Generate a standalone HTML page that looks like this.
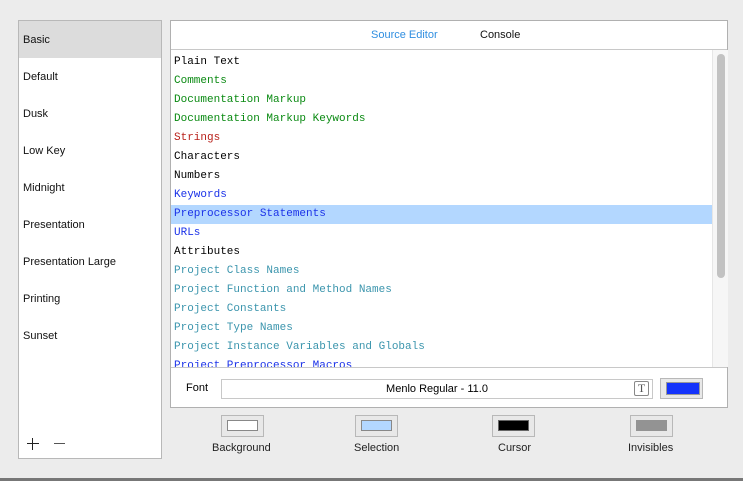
<!DOCTYPE html>
<html><head><style>
body{margin:0;width:743px;height:481px;background:#ececec;position:relative;overflow:hidden;font-family:"Liberation Sans",sans-serif;font-size:11px;}
.left{position:absolute;left:18px;top:20px;width:142px;height:437px;background:#fff;border:1px solid #b8b8b8;}
.left div{height:37px;line-height:39px;padding-left:4px;color:#111;}
.left .sel{background:#dcdcdc;}
.right{position:absolute;left:170px;top:20px;width:556px;height:386px;background:#fff;border:1px solid #b0b0b0;}
.hdr{height:28px;border-bottom:1px solid #c8c8c8;position:relative;}
.hdr span{position:absolute;top:8px;}
.list{position:absolute;left:0;top:29px;width:541px;height:317px;overflow:hidden;font-family:"Liberation Mono",monospace;font-size:11px;padding-top:3px;box-sizing:border-box;}
.list div{height:19px;line-height:19px;padding-left:3px;white-space:pre;}
.g{color:#0a8a12}.r{color:#b8201a}.b{color:#1b32e8}.t{color:#3b95ad}.k{color:#000}
.list .hl{background:#b3d7ff;}
.sb{position:absolute;left:541px;top:29px;width:15px;height:317px;background:#f6f6f6;border-left:1px solid #e6e6e6;}
.thumb{position:absolute;left:4px;top:4px;width:8px;height:224px;background:#c2c2c2;border-radius:4px;}
.foot{position:absolute;left:0;top:346px;width:556px;height:40px;border-top:1px solid #c8c8c8;}
.field{position:absolute;left:50px;top:11px;width:430px;height:18px;border:1px solid #c8c8c8;text-align:center;line-height:18px;font-size:11px;}
.well{position:absolute;border:1px solid #b8b8b8;background:#e8e8e8;}
.well i{position:absolute;left:5px;top:4px;border:1px solid #888;}
.lbl{position:absolute;top:442px;font-size:11px;color:#222;}
</style></head><body>
<div class="left">
<div class="sel">Basic</div><div>Default</div><div>Dusk</div><div>Low Key</div><div>Midnight</div><div>Presentation</div><div>Presentation Large</div><div>Printing</div><div>Sunset</div>
</div>
<div style="position:absolute;left:27px;top:443px;width:12px;height:1px;background:#222"></div>
<div style="position:absolute;left:32px;top:438px;width:1px;height:12px;background:#222"></div>
<div style="position:absolute;left:54px;top:443px;width:11px;height:1px;background:#555"></div>
<div class="right">
<div class="hdr"><span style="left:200px;color:#2f8ee0">Source Editor</span><span style="left:309px;color:#111">Console</span></div>
<div class="list">
<div class="k">Plain Text</div><div class="g">Comments</div><div class="g">Documentation Markup</div><div class="g">Documentation Markup Keywords</div><div class="r">Strings</div><div class="k">Characters</div><div class="k">Numbers</div><div class="b">Keywords</div><div class="b hl">Preprocessor Statements</div><div class="b">URLs</div><div class="k">Attributes</div><div class="t">Project Class Names</div><div class="t">Project Function and Method Names</div><div class="t">Project Constants</div><div class="t">Project Type Names</div><div class="t">Project Instance Variables and Globals</div><div class="b">Project Preprocessor Macros</div>
</div>
<div class="sb"><div class="thumb"></div></div>
<div class="foot">
<span style="position:absolute;left:15px;top:14px;">Font</span>
<div class="field">Menlo Regular - 11.0
<div style="position:absolute;right:3px;top:1px;width:13px;height:13px;border:1px solid #888;border-radius:2px;font-family:'Liberation Serif',serif;font-size:12px;line-height:13px;text-align:center;color:#555">T</div></div>
<div class="well" style="left:489px;top:10px;width:41px;height:19px;"><i style="left:5px;top:3px;width:32px;height:11px;background:#1433fb;border-color:#999"></i></div>
</div>
</div>
<div class="well" style="left:221px;top:415px;width:41px;height:20px;"><i style="width:29px;height:9px;background:#fff"></i></div>
<div class="well" style="left:355px;top:415px;width:41px;height:20px;"><i style="width:29px;height:9px;background:#b3d7ff"></i></div>
<div class="well" style="left:492px;top:415px;width:41px;height:20px;"><i style="width:29px;height:9px;background:#000;border-color:#666"></i></div>
<div class="well" style="left:630px;top:415px;width:41px;height:20px;"><i style="width:31px;height:11px;background:#939393;border:none"></i></div>
<span class="lbl" style="left:212px">Background</span>
<span class="lbl" style="left:354px">Selection</span>
<span class="lbl" style="left:498px">Cursor</span>
<span class="lbl" style="left:628px">Invisibles</span>
<div style="position:absolute;left:0;top:478px;width:743px;height:3px;background:#777"></div>
</body></html>
